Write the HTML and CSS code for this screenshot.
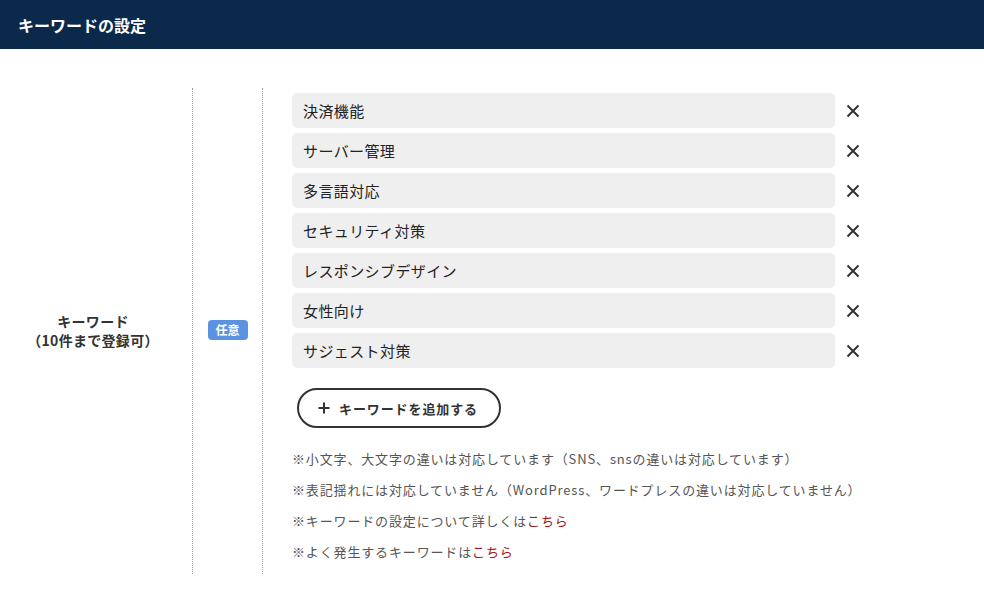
FILE: index.html
```html
<!DOCTYPE html>
<html lang="ja">
<head>
<meta charset="utf-8">
<link rel="stylesheet" href="styles.css">
</head>
<body>
<header class="header"><h1 class="title">キーワードの設定</h1></header>
<main class="form">
  <div class="row">
    <div class="cell label-cell"><p class="label">キーワード<br>（10件まで登録可）</p></div>
    <div class="cell badge-cell"><span class="badge">任意</span></div>
    <div class="cell body-cell">
      <ul class="keywords">
        <li class="kw"><span class="kw-text">決済機能</span><button class="remove" aria-label="削除"><svg viewBox="0 0 14 14" width="14" height="14"><path d="M1.5 1.5L12.5 12.5M12.5 1.5L1.5 12.5" stroke="#333" stroke-width="2" fill="none"/></svg></button></li>
        <li class="kw"><span class="kw-text">サーバー管理</span><button class="remove" aria-label="削除"><svg viewBox="0 0 14 14" width="14" height="14"><path d="M1.5 1.5L12.5 12.5M12.5 1.5L1.5 12.5" stroke="#333" stroke-width="2" fill="none"/></svg></button></li>
        <li class="kw"><span class="kw-text">多言語対応</span><button class="remove" aria-label="削除"><svg viewBox="0 0 14 14" width="14" height="14"><path d="M1.5 1.5L12.5 12.5M12.5 1.5L1.5 12.5" stroke="#333" stroke-width="2" fill="none"/></svg></button></li>
        <li class="kw"><span class="kw-text">セキュリティ対策</span><button class="remove" aria-label="削除"><svg viewBox="0 0 14 14" width="14" height="14"><path d="M1.5 1.5L12.5 12.5M12.5 1.5L1.5 12.5" stroke="#333" stroke-width="2" fill="none"/></svg></button></li>
        <li class="kw"><span class="kw-text">レスポンシブデザイン</span><button class="remove" aria-label="削除"><svg viewBox="0 0 14 14" width="14" height="14"><path d="M1.5 1.5L12.5 12.5M12.5 1.5L1.5 12.5" stroke="#333" stroke-width="2" fill="none"/></svg></button></li>
        <li class="kw"><span class="kw-text">女性向け</span><button class="remove" aria-label="削除"><svg viewBox="0 0 14 14" width="14" height="14"><path d="M1.5 1.5L12.5 12.5M12.5 1.5L1.5 12.5" stroke="#333" stroke-width="2" fill="none"/></svg></button></li>
        <li class="kw"><span class="kw-text">サジェスト対策</span><button class="remove" aria-label="削除"><svg viewBox="0 0 14 14" width="14" height="14"><path d="M1.5 1.5L12.5 12.5M12.5 1.5L1.5 12.5" stroke="#333" stroke-width="2" fill="none"/></svg></button></li>
      </ul>
      <button class="add"><svg viewBox="0 0 12 12" width="12" height="12"><path d="M6 0.5V11.5M0.5 6H11.5" stroke="#333" stroke-width="2" fill="none"/></svg><span>キーワードを追加する</span></button>
      <ul class="notes">
        <li>※小文字、大文字の違いは対応しています（SNS、snsの違いは対応しています）</li>
        <li>※表記揺れには対応していません（WordPress、ワードプレスの違いは対応していません）</li>
        <li>※キーワードの設定について詳しくは<a href="#" class="link">こちら</a></li>
        <li>※よく発生するキーワードは<a href="#" class="link">こちら</a></li>
      </ul>
    </div>
  </div>
</main>
</body>
</html>
```

FILE: styles.css
```css
* { box-sizing: border-box; }
html, body { margin: 0; padding: 0; background: #fff; }
body {
  font-family: "Noto Sans CJK JP", "Noto Sans", sans-serif;
  color: #333;
  width: 984px;
}
.header {
  height: 49px;
  background: #0b2a4b;
  display: flex;
  align-items: center;
  padding-left: 18px;
}
.title {
  margin: 0;
  color: #fff;
  font-size: 16px;
  font-weight: 700;
  line-height: 1;
}
.form { padding-top: 39px; }
.row {
  display: grid;
  grid-template-columns: 193px 70px 1fr;
}
.cell { border-right: 1px dotted #9a9a9a; }
.body-cell { border-right: none; padding: 5px 0 7px 29px; }
.label-cell {
  display: flex;
  align-items: center;
  justify-content: center;
  padding-right: 6px;
}
.label {
  margin: 0;
  text-align: center;
  font-size: 14px;
  font-weight: 700;
  line-height: 19px;
  letter-spacing: 0.3px;
  color: #333;
}
.badge-cell {
  display: flex;
  align-items: center;
  justify-content: center;
}
.badge {
  display: inline-block;
  width: 40px;
  height: 20px;
  line-height: 20px;
  text-align: center;
  background: #5b93e1;
  color: #fff;
  font-size: 12px;
  font-weight: 700;
  border-radius: 4px;
  margin-top: -2px;
}
.keywords {
  list-style: none;
  margin: 0;
  padding: 0;
  display: flex;
  flex-direction: column;
  gap: 5px;
}
.kw {
  display: flex;
  align-items: center;
  gap: 11px;
}
.kw-text {
  width: 543px;
  height: 35px;
  background: #efefef;
  border-radius: 5px;
  padding-left: 11px;
  font-size: 15px;
  line-height: 35px;
  letter-spacing: 0.4px;
  color: #222;
}
.remove {
  border: none;
  background: none;
  padding: 0;
  width: 14px;
  height: 14px;
  display: flex;
}
.add {
  margin: 20px 0 0 5px;
  width: 204px;
  height: 40px;
  border: 2px solid #333;
  border-radius: 20px;
  background: #fff;
  display: flex;
  align-items: center;
  justify-content: center;
  gap: 9px;
  font-family: inherit;
  font-size: 13px;
  font-weight: 700;
  letter-spacing: 0.9px;
  color: #333;
  padding: 0 2px 0 0;
}
.notes {
  list-style: none;
  margin: 15px 0 0;
  padding: 0;
  font-size: 13px;
  line-height: 31px;
  letter-spacing: 0.85px;
  color: #555;
}
.link { color: #a3141c; text-decoration: none; }
```
